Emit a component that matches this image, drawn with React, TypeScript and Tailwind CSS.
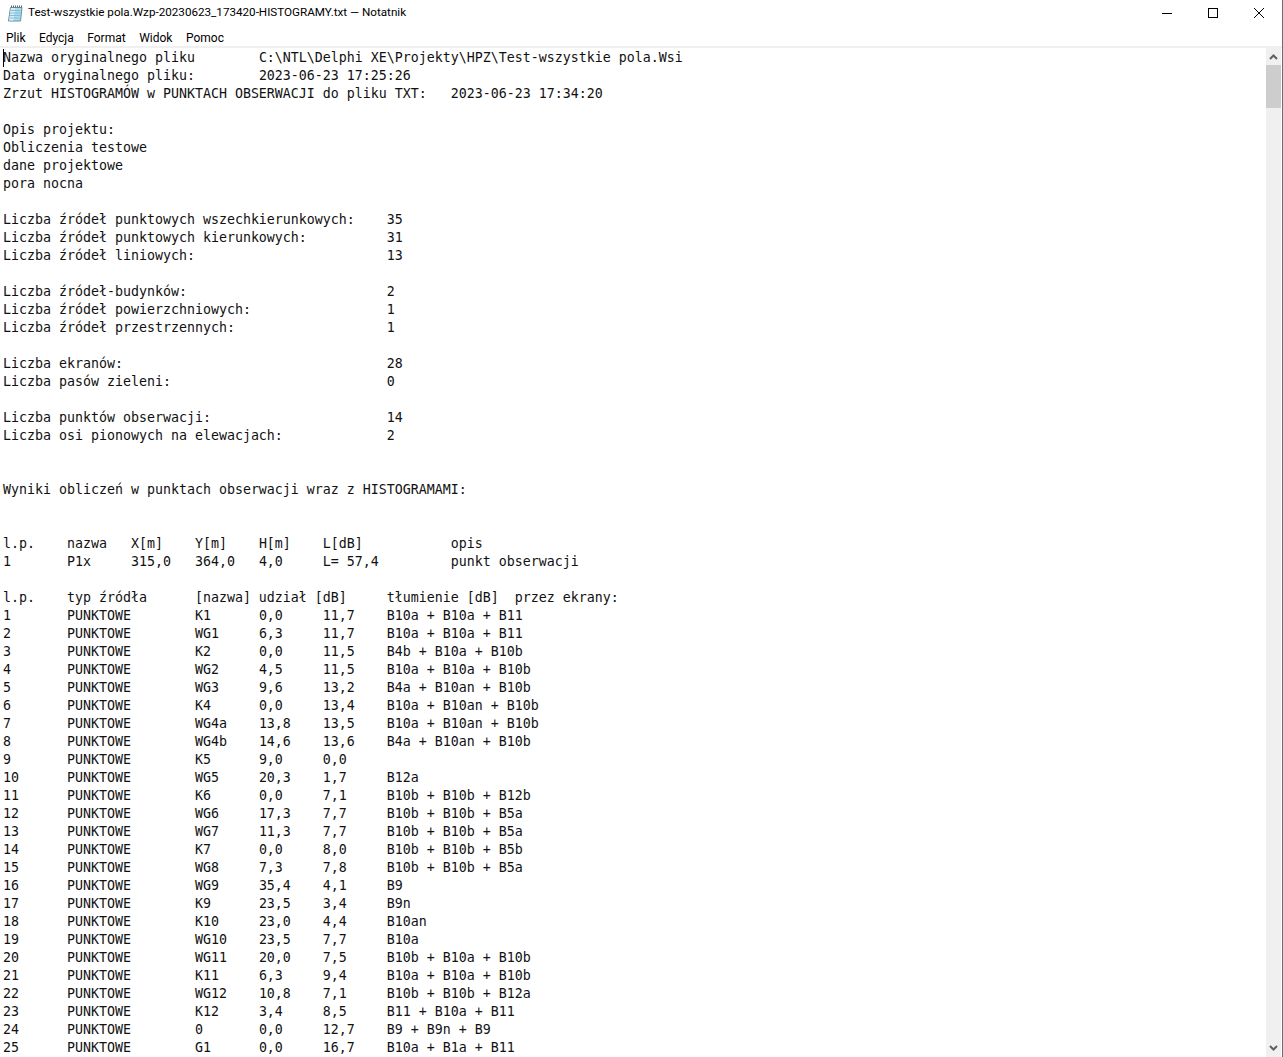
const lines = [
  'Nazwa oryginalnego pliku\tC:\\NTL\\Delphi XE\\Projekty\\HPZ\\Test-wszystkie pola.Wsi',
  'Data oryginalnego pliku:\t2023-06-23 17:25:26',
  'Zrzut HISTOGRAMÓW w PUNKTACH OBSERWACJI do pliku TXT:\t2023-06-23 17:34:20',
  '',
  'Opis projektu:',
  'Obliczenia testowe',
  'dane projektowe',
  'pora nocna',
  '',
  'Liczba źródeł punktowych wszechkierunkowych:\t35',
  'Liczba źródeł punktowych kierunkowych:\t\t31',
  'Liczba źródeł liniowych:\t\t\t13',
  '',
  'Liczba źródeł-budynków:\t\t\t\t2',
  'Liczba źródeł powierzchniowych:\t\t\t1',
  'Liczba źródeł przestrzennych:\t\t\t1',
  '',
  'Liczba ekranów:\t\t\t\t\t28',
  'Liczba pasów zieleni:\t\t\t\t0',
  '',
  'Liczba punktów obserwacji:\t\t\t14',
  'Liczba osi pionowych na elewacjach:\t\t2',
  '',
  '',
  'Wyniki obliczeń w punktach obserwacji wraz z HISTOGRAMAMI:',
  '',
  '',
  'l.p.\tnazwa\tX[m]\tY[m]\tH[m]\tL[dB]\t\topis',
  '1\tP1x\t315,0\t364,0\t4,0\tL= 57,4\t\tpunkt obserwacji',
  '',
  'l.p.\ttyp źródła\t[nazwa] udział [dB]\ttłumienie [dB]  przez ekrany:',
]

const sources: [string, string, string, string][] = [
  ['K1', '0,0', '11,7', 'B10a + B10a + B11'],
  ['WG1', '6,3', '11,7', 'B10a + B10a + B11'],
  ['K2', '0,0', '11,5', 'B4b + B10a + B10b'],
  ['WG2', '4,5', '11,5', 'B10a + B10a + B10b'],
  ['WG3', '9,6', '13,2', 'B4a + B10an + B10b'],
  ['K4', '0,0', '13,4', 'B10a + B10an + B10b'],
  ['WG4a', '13,8', '13,5', 'B10a + B10an + B10b'],
  ['WG4b', '14,6', '13,6', 'B4a + B10an + B10b'],
  ['K5', '9,0', '0,0', ''],
  ['WG5', '20,3', '1,7', 'B12a'],
  ['K6', '0,0', '7,1', 'B10b + B10b + B12b'],
  ['WG6', '17,3', '7,7', 'B10b + B10b + B5a'],
  ['WG7', '11,3', '7,7', 'B10b + B10b + B5a'],
  ['K7', '0,0', '8,0', 'B10b + B10b + B5b'],
  ['WG8', '7,3', '7,8', 'B10b + B10b + B5a'],
  ['WG9', '35,4', '4,1', 'B9'],
  ['K9', '23,5', '3,4', 'B9n'],
  ['K10', '23,0', '4,4', 'B10an'],
  ['WG10', '23,5', '7,7', 'B10a'],
  ['WG11', '20,0', '7,5', 'B10b + B10a + B10b'],
  ['K11', '6,3', '9,4', 'B10a + B10a + B10b'],
  ['WG12', '10,8', '7,1', 'B10b + B10b + B12a'],
  ['K12', '3,4', '8,5', 'B11 + B10a + B11'],
  ['0', '0,0', '12,7', 'B9 + B9n + B9'],
  ['G1', '0,0', '16,7', 'B10a + B1a + B11'],
]

const text = [
  ...lines,
  ...sources.map((s, i) => `${i + 1}\tPUNKTOWE\t${s[0]}\t${s[1]}\t${s[2]}\t${s[3]}`),
].join('\n')

const menu = ['Plik', 'Edycja', 'Format', 'Widok', 'Pomoc']

function NotepadIcon() {
  return (
    <svg width="16" height="17" viewBox="0 0 16 17" className="shrink-0">
      <path d="M3.5 2.5h11.5l-1.5 13.5H1.5z" fill="#a9dcef" stroke="#6f8a99" />
      <path d="M3.8 3h4.5L6.5 15.5H2.2z" fill="#d3f0f9" />
      <path d="M3.5 5.5h10M3.2 8h10M3 10.5h10M2.7 13h10" stroke="#86bcd2" />
      <path d="M4 1.5h11" stroke="#5f6a70" strokeWidth="2" strokeDasharray="1 1" />
    </svg>
  )
}

export default function App() {
  return (
    <div className="h-[1057px] w-[1283px] overflow-hidden bg-white border-r border-[#6d6d6d] flex flex-col font-['Roboto',sans-serif] text-black">
      {/* title bar */}
      <div className="h-[26px] shrink-0 flex items-center">
        <div className="pl-[7px] pr-[5px]">
          <NotepadIcon />
        </div>
        <span className="text-[11.66px] whitespace-pre">Test-wszystkie pola.Wzp-20230623_173420-HISTOGRAMY.txt — Notatnik</span>
        <div className="ml-auto flex items-center">
          <div className="w-[46px] h-[26px] flex items-center justify-center">
            <svg width="10" height="10" viewBox="0 0 10 10"><path d="M0 5.5h10" stroke="#000" /></svg>
          </div>
          <div className="w-[46px] h-[26px] flex items-center justify-center">
            <svg width="10" height="10" viewBox="0 0 10 10"><rect x="0.5" y="0.5" width="9" height="9" fill="none" stroke="#000" /></svg>
          </div>
          <div className="w-[46px] h-[26px] flex items-center justify-center">
            <svg width="10" height="10" viewBox="0 0 10 10"><path d="M0 0l10 10M10 0L0 10" stroke="#000" /></svg>
          </div>
        </div>
      </div>

      {/* menu bar */}
      <div className="h-[20px] shrink-0 flex items-center gap-[13.5px] pl-[6px] pt-[3px] text-[12px]">
        {menu.map((m) => (
          <span key={m}>{m}</span>
        ))}
      </div>
      <div className="h-[2px] shrink-0 bg-[#f0f0f0]" />

      {/* editor */}
      <div className="flex-1 min-h-0 flex">
        <div className="relative flex-1 min-w-0 overflow-hidden pl-[3px] pt-[1px]">
          <pre className="font-['DejaVu_Sans_Mono',monospace] text-[13.29px] leading-[18px] text-[#111] [tab-size:8]">{text}</pre>
          <div className="absolute left-[3px] top-[1px] h-[18px] w-px bg-black" />
        </div>
        <div className="w-[15px] shrink-0 mr-px bg-[#f0f0f0] flex flex-col">
          <div className="h-[17px] flex items-center justify-center">
            <svg width="9" height="6" viewBox="0 0 9 6"><path d="M1 5l3.5-3.5L8 5" fill="none" stroke="#606060" strokeWidth="2" /></svg>
          </div>
          <div className="h-[43px] bg-[#cdcdcd]" />
          <div className="mt-auto h-[17px] flex items-center justify-center mb-px">
            <svg width="9" height="6" viewBox="0 0 9 6"><path d="M1 1l3.5 3.5L8 1" fill="none" stroke="#606060" strokeWidth="2" /></svg>
          </div>
        </div>
      </div>
    </div>
  )
}
